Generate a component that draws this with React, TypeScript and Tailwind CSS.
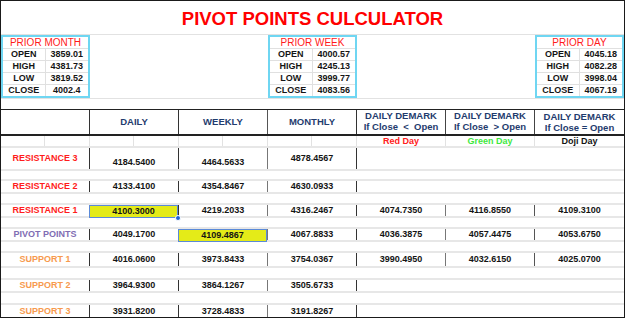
import React from "react";

type Prior = { title: string; rows: [string, string][] };

const PRIORS: Prior[] = [
  {
    title: "PRIOR MONTH",
    rows: [
      ["OPEN", "3859.01"],
      ["HIGH", "4381.73"],
      ["LOW", "3819.52"],
      ["CLOSE", "4002.4"],
    ],
  },
  {
    title: "PRIOR WEEK",
    rows: [
      ["OPEN", "4000.57"],
      ["HIGH", "4245.13"],
      ["LOW", "3999.77"],
      ["CLOSE", "4083.56"],
    ],
  },
  {
    title: "PRIOR DAY",
    rows: [
      ["OPEN", "4045.18"],
      ["HIGH", "4082.28"],
      ["LOW", "3998.04"],
      ["CLOSE", "4067.19"],
    ],
  },
];

const PriorBox = ({ prior, className = "" }: { prior: Prior; className?: string }) => (
  <div className={`flex flex-col border-2 border-[#6fd6f2] ${className}`}>
    <div className="h-[11px] flex items-center justify-center text-[10px] leading-none text-[#ff1a1a]">
      {prior.title}
    </div>
    {prior.rows.map(([k, v]) => (
      <div key={k} className="h-[12px] grid grid-cols-2 border-t border-[#e0e0e0]">
        <div className="flex items-center justify-center border-r border-[#e0e0e0] text-[9px] font-bold leading-none text-[#151515]">
          {k}
        </div>
        <div className="flex items-center justify-center text-[9px] font-bold leading-none text-[#151515]">
          {v}
        </div>
      </div>
    ))}
  </div>
);

const cell = "flex items-center justify-center text-[9px] font-bold leading-none text-[#141414]";

interface DataRowProps {
  label: string;
  tone: string;
  values: string[];
  demark?: string[];
  height: string;
  last?: boolean;
  low?: boolean;
  mark?: "daily" | "weekly";
}

const Selected = ({ value, handle }: { value: string; handle?: boolean }) => (
  <div className="absolute top-0 -left-[1px] right-0 -bottom-[2px] z-10 flex items-center justify-center border border-[#5b8ad8] bg-[#e4eb18] text-[9px] font-bold leading-none text-[#141414]">
    {value}
    {handle && (
      <span className="absolute -right-[4px] -bottom-[4px] w-[6px] h-[6px] rounded-full bg-[#1f63d4] border border-white" />
    )}
  </div>
);

const DataRow = ({ label, tone, values, demark, height, last, low, mark }: DataRowProps) => (
  <div className={`grid grid-cols-7 ${height} ${last ? "" : "border-b-2 border-[#e7e7e7]"}`}>
    <div className={`flex items-center justify-center border-r border-[#333] text-[9px] font-bold leading-none ${tone}`}>
      {label}
    </div>
    {values.map((v, i) => {
      const selected = (mark === "daily" && i === 0) || (mark === "weekly" && i === 1);
      const lines = i === 1 ? "border-[#777]" : "border-[#333]";
      const align = low && i < 2 ? "items-end pb-[2px]" : "";
      return (
        <div key={i} className={`relative border-r ${lines} ${cell} ${align}`}>
          {selected ? <Selected value={v} handle={mark === "daily"} /> : v}
        </div>
      );
    })}
    {demark ? (
      <>
        <div className={`border-r border-[#777] ${cell}`}>{demark[0]}</div>
        <div className={`border-r border-[#555] ${cell}`}>{demark[1]}</div>
        <div className={cell}>{demark[2]}</div>
      </>
    ) : (
      <div className="col-span-3" />
    )}
  </div>
);

const Gap = ({ height }: { height: string }) => (
  <div className={`${height} border-b-2 border-[#e7e7e7]`} />
);

const RED = "text-[#ff1c1c]";
const PURPLE = "text-[#7f6db3]";
const ORANGE = "text-[#f79a4e]";

const DemarkHead = ({ line }: { line: string }) => (
  <div className="flex flex-col items-center justify-center text-[9.5px] font-bold leading-[11px] text-[#1f3c6e]">
    <span>DAILY DEMARK</span>
    <span className="whitespace-pre">{line}</span>
  </div>
);

export default function App() {
  return (
    <div className="w-[625px] h-[318px] overflow-hidden border border-[#1a1a1a] bg-white [font-family:'Liberation_Sans',Arial,sans-serif]">
      <div className="h-[33px] pt-[4px] flex items-center justify-center text-[18.5px] font-bold leading-none text-[#ff0000]">
        PIVOT POINTS CULCULATOR
      </div>

      <div className="h-[65px] grid grid-cols-7 border-y border-[#e2e2e2]">
        <PriorBox prior={PRIORS[0]} />
        <PriorBox prior={PRIORS[1]} className="col-start-4" />
        <PriorBox prior={PRIORS[2]} className="col-start-7" />
      </div>

      <div className="h-[10px]" />

      <div className="h-[27px] grid grid-cols-7 border-t border-b-2 border-[#222]">
        <div className="border-r border-[#333]" />
        <div className="flex items-center justify-center border-r border-[#333] text-[9.5px] font-bold text-[#1f3c6e]">DAILY</div>
        <div className="flex items-center justify-center border-r border-[#555] text-[9.5px] font-bold text-[#1f3c6e]">WEEKLY</div>
        <div className="flex items-center justify-center border-r border-[#333] text-[9.5px] font-bold text-[#1f3c6e]">MONTHLY</div>
        <div className="border-r border-[#444]">
          <DemarkHead line={"If Close  <  Open"} />
        </div>
        <div className="border-r border-[#444]">
          <DemarkHead line={"If Close  > Open"} />
        </div>
        <DemarkHead line={"If Close = Open"} />
      </div>

      <div className="h-[12px] grid grid-cols-7 border-b-2 border-[#e7e7e7]">
        {[0, 1, 2, 3].map((i) => (
          <div key={i} className="grid grid-cols-2 border-r border-[#e2e2e2]">
            <div className="border-r border-[#e2e2e2]" />
            <div />
          </div>
        ))}
        <div className="flex items-center justify-center border-r border-[#e2e2e2] text-[9px] font-bold leading-none text-[#ff2020]">Red Day</div>
        <div className="flex items-center justify-center border-r border-[#e2e2e2] text-[9px] font-bold leading-none text-[#3fe83f]">Green Day</div>
        <div className="flex items-center justify-center text-[9px] font-bold leading-none text-[#141414]">Doji Day</div>
      </div>

      <DataRow label="RESISTANCE 3" tone={RED} height="h-[23px]" low values={["4184.5400", "4464.5633", "4878.4567"]} />
      <Gap height="h-[10px]" />
      <DataRow label="RESISTANCE 2" tone={RED} height="h-[13px]" values={["4133.4100", "4354.8467", "4630.0933"]} />
      <Gap height="h-[11px]" />
      <DataRow
        label="RESISTANCE 1"
        tone={RED}
        height="h-[13px]"
        mark="daily"
        values={["4100.3000", "4219.2033", "4316.2467"]}
        demark={["4074.7350", "4116.8550", "4109.3100"]}
      />
      <Gap height="h-[11px]" />
      <DataRow
        label="PIVOT POINTS"
        tone={PURPLE}
        height="h-[13px]"
        mark="weekly"
        values={["4049.1700", "4109.4867", "4067.8833"]}
        demark={["4036.3875", "4057.4475", "4053.6750"]}
      />
      <Gap height="h-[11px]" />
      <DataRow
        label="SUPPORT 1"
        tone={ORANGE}
        height="h-[15px]"
        values={["4016.0600", "3973.8433", "3754.0367"]}
        demark={["3990.4950", "4032.6150", "4025.0700"]}
      />
      <Gap height="h-[12px]" />
      <DataRow label="SUPPORT 2" tone={ORANGE} height="h-[13px]" values={["3964.9300", "3864.1267", "3505.6733"]} />
      <Gap height="h-[12px]" />
      <DataRow label="SUPPORT 3" tone={ORANGE} height="h-[12px]" last values={["3931.8200", "3728.4833", "3191.8267"]} />
    </div>
  );
}
